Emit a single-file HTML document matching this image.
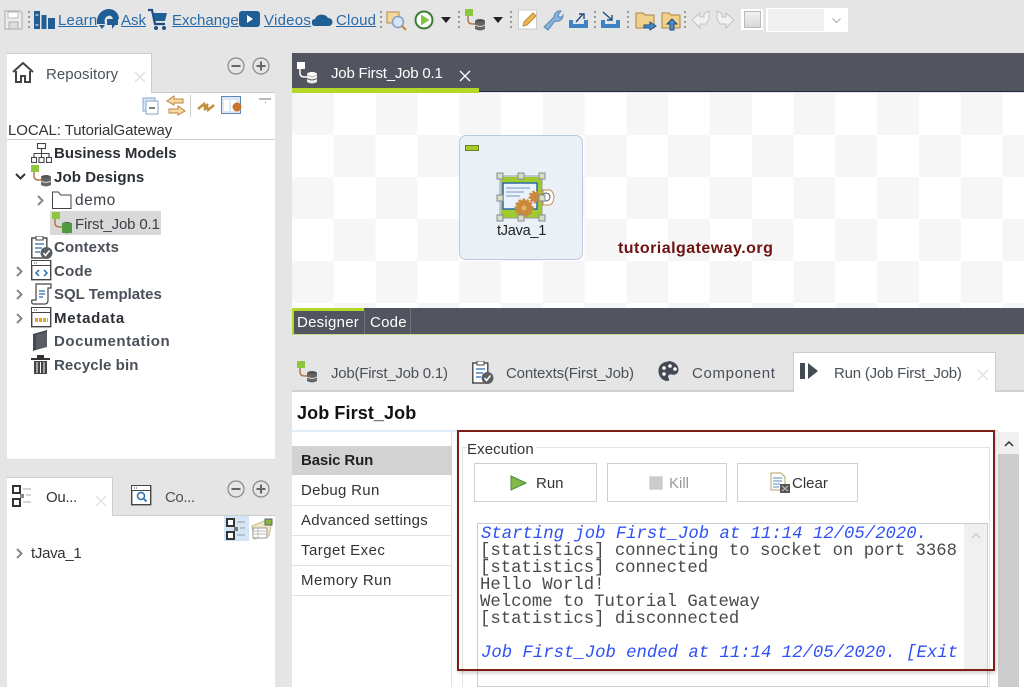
<!DOCTYPE html>
<html><head><meta charset="utf-8"><style>
html,body{margin:0;padding:0}
body{width:1024px;height:687px;overflow:hidden;position:relative;background:#e5e5e5;font-family:"Liberation Sans",sans-serif;font-size:15px;color:#3a4048}
.a,.t,svg.i{position:absolute}
.t{white-space:pre;line-height:20px;margin-top:1px}
.l{color:#2a6aa8;text-decoration:underline;font-size:15px}
.b{font-weight:bold;color:#2b2f36}
.dots{position:absolute;width:2px;height:18px;top:11px;background:repeating-linear-gradient(#999 0 2px,transparent 2px 5px)}
.m{font-family:"Liberation Mono",monospace;font-size:17.3px;line-height:17px;color:#4a4a4a;left:480px}
.mb{color:#2f50f5;font-style:italic;left:481px}
.btn{position:absolute;top:463px;height:37px;background:#fff;border:1px solid #cfcfcf;box-sizing:content-box}
.sep{position:absolute;left:292px;width:160px;height:1px;background:#e2e2e2}
</style></head><body>
<svg width="0" height="0" style="position:absolute"><defs>
<g id="job"><rect x="0" y="0" width="8" height="7" fill="#8ec63f"/><path d="M3 7v4q0 4 5 4h4" fill="none" stroke="#b5794a" stroke-width="1.5"/><ellipse cx="15" cy="12" rx="5" ry="2" fill="#555"/><path d="M10 12v8q5 3 10 0v-8q-5 3-10 0z" fill="#666"/><path d="M10 16q5 3 10 0" stroke="#ddd" fill="none"/></g>
<g id="ctx"><rect x=".8" y="2" width="15" height="20" fill="#fff" stroke="#444" stroke-width="1.4"/><rect x="5" y="0" width="7" height="4" fill="#fff" stroke="#444"/><path d="M4 8h9M4 12h7M4 16h5" stroke="#2a6aa8" stroke-width="1.3"/><circle cx="15.5" cy="17" r="6" fill="#5a5f66"/><path d="M12.5 17l2 2.5 4-5" stroke="#fff" stroke-width="1.5" fill="none"/></g>
<g id="win"><rect x=".7" y=".7" width="19" height="19" fill="#fff" stroke="#444" stroke-width="1.4"/><rect x="1" y="1" width="18" height="4" fill="#fff"/><path d="M1 5.5h18" stroke="#444"/><path d="M3 3h4" stroke="#444" stroke-dasharray="1 1"/></g>
<path id="ch" d="M0 0l4.500 4.500-4.500 4.500" fill="none" stroke="#888" stroke-width="2"/>
</defs></svg>

<!-- toolbar -->
<svg class="i" style="left:4px;top:10px" width="19" height="20"><path d="M1 1h15l2 2v16H1z" fill="#eee" stroke="#aaa"/><rect x="4" y="2" width="10" height="6" fill="#fff" stroke="#bbb"/><rect x="5" y="12" width="9" height="7" fill="#ddd" stroke="#aaa"/></svg>
<div class="dots" style="left:28px"></div>
<svg class="i" style="left:34px;top:10px" width="22" height="20"><rect x="0" y="1" width="6" height="18" fill="#1f5f96"/><rect x="7.500" y="5" width="5" height="14" fill="#1f5f96"/><rect x="14" y="8" width="7" height="11" fill="#1f5f96"/><path d="M1.500 5h3M1.500 15h3" stroke="#fff"/></svg>
<div class="t l" style="left:58px;top:10px;letter-spacing:.2px">Learn</div>
<svg class="i" style="left:97px;top:9px" width="22" height="21"><path d="M0 15C-1 5 6 0 12 0c6 0 10 5 10 10h-6c-1-3-3-4-5-3-3 1-4 4-3 8z" fill="#1f5f96"/><path d="M10 10h11v6h-3l-3 4v-4h-5z" fill="#1f5f96"/><path d="M2 16h6l-3 4z" fill="#1f5f96"/></svg>
<div class="t l" style="left:121px;top:10px">Ask</div>
<svg class="i" style="left:147px;top:8px" width="21" height="23"><path d="M1 2h4l3 14h10" fill="none" stroke="#1f4f80" stroke-width="2.200"/><path d="M6 5h14l-2 8H8z" fill="#1f5f96"/><circle cx="9" cy="20" r="2" fill="#1f4f80"/><circle cx="17" cy="20" r="2" fill="#1f4f80"/></svg>
<div class="t l" style="left:172px;top:10px">Exchange</div>
<svg class="i" style="left:239px;top:11px" width="21" height="17"><rect width="21" height="16" rx="3" fill="#1f5f96"/><path d="M8 4l6 4-6 4z" fill="#fff"/></svg>
<div class="t l" style="left:264px;top:10px;letter-spacing:.25px">Videos</div>
<svg class="i" style="left:312px;top:12px" width="21" height="15"><path d="M3 14a3.500 3.500 0 0 1 0-7 7 6 0 0 1 13-1 4 4 0 0 1 1 8z" fill="#1f5f96"/></svg>
<div class="t l" style="left:336px;top:10px;letter-spacing:.2px">Cloud</div>
<div class="dots" style="left:380px"></div>
<svg class="i" style="left:386px;top:9px" width="22" height="22"><rect x="1" y="3" width="12" height="11" fill="#f3d79b" stroke="#b98a45"/><circle cx="12" cy="13" r="5.500" fill="#d5e5f5" stroke="#7f9fc0" stroke-width="1.500"/><path d="M16 17l4 4" stroke="#c8873a" stroke-width="2"/></svg>
<svg class="i" style="left:414px;top:10px" width="20" height="20"><circle cx="10" cy="10" r="9.500" fill="#3d7a35"/><circle cx="10" cy="10" r="7.500" fill="#fff"/><path d="M7 4.500l8.500 5.500-8.500 5.500z" fill="#82c341"/></svg>
<svg class="i" style="left:441px;top:17px" width="10" height="7"><path d="M0 0h10l-5 6z" fill="#222"/></svg>
<div class="dots" style="left:458px"></div>
<svg class="i" style="left:465px;top:9px" width="22" height="22"><use href="#job"/></svg>
<svg class="i" style="left:493px;top:17px" width="10" height="7"><path d="M0 0h10l-5 6z" fill="#222"/></svg>
<div class="dots" style="left:510px"></div>
<svg class="i" style="left:518px;top:9px" width="20" height="21"><rect x=".5" y="1" width="18" height="19" fill="#fff" stroke="#ccc"/><path d="M5 17l1-4 9-9 3 3-9 9z" fill="#eeb54e" stroke="#b98a45"/></svg>
<svg class="i" style="left:542px;top:9px" width="22" height="22"><path d="M2 18L12 8a6 6 0 0 1 7-6l-3 4 1 2 3 0 1-2a6 6 0 0 1-8 6L6 21z" fill="#8ab0dc" stroke="#5c88b8"/></svg>
<svg class="i" style="left:568px;top:11px" width="21" height="18"><path d="M1 9v8h19V9h-4v4H5V9z" fill="#3d82c4"/><path d="M8 11l7-8M11 3h5v5" stroke="#1f4f80" stroke-width="1.400" fill="none"/></svg>
<div class="dots" style="left:594px"></div>
<svg class="i" style="left:600px;top:11px" width="21" height="18"><path d="M1 9v8h19V9h-4v4H5V9z" fill="#3d82c4"/><path d="M3 1l9 8M12 4v5H7" stroke="#1f4f80" stroke-width="1.400" fill="none"/></svg>
<div class="dots" style="left:627px"></div>
<svg class="i" style="left:635px;top:10px" width="22" height="21"><path d="M1 3h7l2 2h9v13H1z" fill="#f1d089" stroke="#ab8547"/><path d="M9 15h6v-3l6 4-6 4v-2H9z" fill="#4d8ac8" stroke="#1f4f80"/></svg>
<svg class="i" style="left:661px;top:10px" width="22" height="21"><path d="M1 3h7l2 2h9v13H1z" fill="#f1d089" stroke="#ab8547"/><path d="M11 9l5 5h-3v6H9v-6H6z" fill="#4d8ac8" stroke="#1f4f80"/></svg>
<div class="dots" style="left:684px"></div>
<svg class="i" style="left:691px;top:10px" width="20" height="20"><path d="M18 1l-4 2-1 1v3H9V3L1 10l8 8v-4h6l3-5z" fill="#f1f1f1" stroke="#c2c2c2"/></svg>
<svg class="i" style="left:715px;top:10px" width="20" height="20"><path d="M2 1l4 2 1 1v3h4V3l8 7-8 8v-4H5L2 9z" fill="#f1f1f1" stroke="#c2c2c2"/></svg>
<div class="a" style="left:741px;top:9px;width:22px;height:21px;background:#fff"></div>
<div class="a" style="left:744px;top:11px;width:17px;height:17px;background:linear-gradient(#f2f2f2,#d8d8d8);border:1px solid #bbb;box-sizing:border-box"></div>
<div class="a" style="left:766px;top:8px;width:82px;height:24px;background:#fff"></div>
<div class="a" style="left:768px;top:9px;width:56px;height:22px;background:#f0f0f0"></div>
<svg class="i" style="left:832px;top:18px" width="10" height="6"><path d="M.5.500l4 4 4-4" fill="none" stroke="#aaa"/></svg>

<!-- Repository panel -->
<div class="a" style="left:7px;top:53px;width:145px;height:41px;background:#fff;border-top:1px solid #ccc;border-right:1px solid #ccc;box-sizing:border-box"></div>
<div class="a" style="left:152px;top:92px;width:123px;height:1px;background:#ccc"></div>
<div class="a" style="left:7px;top:93px;width:268px;height:367px;background:#fff;border-bottom:1px solid #ddd;box-sizing:border-box"></div>
<svg class="i" style="left:12px;top:62px" width="22" height="21"><path d="M1 10L11 1l10 9" fill="none" stroke="#444" stroke-width="2"/><path d="M4 9v11h5v-6h4v6h5V9" fill="#fff" stroke="#444" stroke-width="2"/></svg>
<div class="t" style="left:46px;top:64px;letter-spacing:.05px;color:#4a5058">Repository</div>
<svg class="i" style="left:134px;top:71px" width="12" height="12"><path d="M1 1l10 10M11 1L1 11" stroke="#e2e2e2" stroke-width="1.500"/></svg>
<svg class="i" style="left:227px;top:57px" width="44" height="18"><circle cx="9" cy="9" r="8" fill="none" stroke="#888" stroke-width="1.200"/><path d="M4.500 9h9" stroke="#666" stroke-width="2"/><circle cx="34" cy="9" r="8" fill="none" stroke="#888" stroke-width="1.200"/><path d="M29.500 9h9M34 4.500v9" stroke="#666" stroke-width="2"/></svg>
<svg class="i" style="left:142px;top:96px" width="18" height="20"><rect x="1" y="2" width="12" height="13" fill="#dce8f5" stroke="#8aa7c8"/><rect x="4" y="5" width="12" height="13" fill="#fff" stroke="#8aa7c8"/><path d="M7 12h6" stroke="#555" stroke-width="1.500"/></svg>
<svg class="i" style="left:165px;top:95px" width="22" height="22"><path d="M9 1L2 6l7 4V8h9V4H9zM13 11l7 5-7 4v-2H4v-4h9z" fill="#f6d9a5" stroke="#b9843d"/></svg>
<div class="a" style="left:190px;top:95px;width:1px;height:22px;background:#ccc"></div>
<svg class="i" style="left:196px;top:97px" width="20" height="20"><path d="M2 12l6-5 1 3 3-3M18 8l-6 5-1-3-3 3" fill="none" stroke="#c38e3d" stroke-width="2.500"/></svg>
<svg class="i" style="left:221px;top:96px" width="22" height="19"><rect x=".5" y=".5" width="19" height="17" fill="#dce8f5" stroke="#5c88b8"/><rect x="3" y="4" width="5" height="11" fill="#fff"/><rect x="10" y="4" width="5" height="11" fill="#fff"/><circle cx="16" cy="11" r="4.500" fill="#c8742a"/></svg>
<svg class="i" style="left:258px;top:98px" width="14" height="8"><path d="M1 1h12" stroke="#777"/><path d="M7 4h1v1H7z" fill="#777"/></svg>
<div class="t" style="left:8px;top:120px;color:#333;letter-spacing:-.08px">LOCAL: TutorialGateway</div>
<div class="a" style="left:7px;top:139px;width:268px;height:1px;background:#ccc"></div>

<svg class="i" style="left:31px;top:143px" width="21" height="20"><g fill="#fff" stroke="#444" stroke-width="1.100"><rect x="6.500" y=".5" width="8" height="5"/><rect x=".5" y="14.500" width="5" height="5"/><rect x="8" y="14.500" width="5" height="5"/><rect x="15.500" y="14.500" width="5" height="5"/><path d="M10.500 5.500v9M3 14.500v-4h15v4" fill="none"/></g></svg>
<div class="t b" style="left:54px;top:143px">Business Models</div>
<svg class="i" style="left:15px;top:173px" width="11" height="8"><path d="M1 1l4.500 4.500L10 1" fill="none" stroke="#333" stroke-width="2"/></svg>
<svg class="i" style="left:31px;top:165px" width="22" height="22"><use href="#job"/></svg>
<div class="t b" style="left:54px;top:167px;letter-spacing:.1px">Job Designs</div>
<svg class="i" style="left:37px;top:195px" width="8" height="11"><use href="#ch" x="1" y="1"/></svg>
<svg class="i" style="left:52px;top:191px" width="20" height="18"><path d="M.5 17.500V1h6l2 3h10.500v13.500z" fill="#fff" stroke="#444"/></svg>
<div class="t" style="left:75px;top:190px;font-size:15.500px;letter-spacing:.5px">demo</div>
<div class="a" style="left:50px;top:211px;width:111px;height:24px;background:#d9d9d9"></div>
<svg class="i" style="left:52px;top:212px" width="22" height="22"><use href="#job"/><rect x="10" y="11" width="10" height="10" fill="#4d9a3f"/></svg>
<div class="t" style="left:75px;top:214px;letter-spacing:-.15px">First_Job 0.1</div>
<svg class="i" style="left:31px;top:236px" width="22" height="23"><use href="#ctx"/></svg>
<div class="t b" style="left:54px;top:237px;color:#4a5058;letter-spacing:.12px">Contexts</div>
<svg class="i" style="left:16px;top:266px" width="8" height="11"><use href="#ch" x="1" y="1"/></svg>
<svg class="i" style="left:31px;top:260px" width="21" height="21"><use href="#win"/><path d="M8 10l-3 3 3 3M13 10l3 3-3 3" stroke="#2a6aa8" stroke-width="1.500" fill="none"/></svg>
<div class="t b" style="left:54px;top:261px;color:#4a5058;letter-spacing:.25px">Code</div>
<svg class="i" style="left:16px;top:289px" width="8" height="11"><use href="#ch" x="1" y="1"/></svg>
<svg class="i" style="left:31px;top:283px" width="21" height="22"><path d="M5 1h15v4h-3v12q0 4-3 4H2q-2-1-1-4h4z" fill="#fff" stroke="#444" stroke-width="1.200"/><path d="M8 8h6M8 11h6M8 14h4" stroke="#2a6aa8" stroke-width="1.200"/></svg>
<div class="t b" style="left:54px;top:284px;color:#4a5058">SQL Templates</div>
<svg class="i" style="left:16px;top:313px" width="8" height="11"><use href="#ch" x="1" y="1"/></svg>
<svg class="i" style="left:31px;top:307px" width="21" height="21"><use href="#win"/><path d="M4 13h13" stroke="#e3a33b" stroke-width="4" stroke-dasharray="3 1"/></svg>
<div class="t b" style="left:54px;top:308px;letter-spacing:.75px">Metadata</div>
<svg class="i" style="left:33px;top:330px" width="17" height="22"><path d="M0 4L14 0v16L0 21z" fill="#44484e"/><path d="M3 5l11-3v15L3 20z" fill="#595d64"/></svg>
<div class="t b" style="left:54px;top:331px;color:#4a5058;letter-spacing:.54px">Documentation</div>
<svg class="i" style="left:31px;top:354px" width="19" height="20"><path d="M0 4h19v2H0zM6 1h7v3H6z" fill="#333"/><path d="M3 7h13v13H3z" fill="#444"/><path d="M6 8v11M9.500 8v11M13 8v11" stroke="#fff"/></svg>
<div class="t b" style="left:54px;top:355px;color:#4a5058;letter-spacing:.1px">Recycle bin</div>

<!-- Outline panel -->
<div class="a" style="left:7px;top:477px;width:106px;height:40px;background:#fff;border-top:1px solid #ccc;border-right:1px solid #ccc;box-sizing:border-box"></div>
<div class="a" style="left:113px;top:515px;width:162px;height:1px;background:#ccc"></div>
<div class="a" style="left:7px;top:516px;width:268px;height:171px;background:#fff"></div>
<svg class="i" style="left:12px;top:485px" width="20" height="22"><rect x="1" y="1" width="7" height="7" fill="#fff" stroke="#333" stroke-width="2"/><rect x="1" y="14" width="7" height="7" fill="#fff" stroke="#333" stroke-width="2"/><rect x="8" y="9" width="4" height="4" fill="#888"/><path d="M11 4h8M14 10h5M11 17h8" stroke="#aaa"/></svg>
<div class="t" style="left:46px;top:487px;color:#333;letter-spacing:-.3px">Ou...</div>
<svg class="i" style="left:95px;top:495px" width="12" height="12"><path d="M1 1l10 10M11 1L1 11" stroke="#e2e2e2" stroke-width="1.500"/></svg>
<svg class="i" style="left:131px;top:485px" width="21" height="21"><use href="#win"/><circle cx="10" cy="11" r="3.500" fill="none" stroke="#2a6aa8" stroke-width="1.500"/><path d="M12.500 13.500l3 3" stroke="#2a6aa8" stroke-width="1.700"/></svg>
<div class="t" style="left:165px;top:487px;color:#4a5058;letter-spacing:-.4px">Co...</div>
<svg class="i" style="left:227px;top:480px" width="44" height="18"><circle cx="9" cy="9" r="8" fill="none" stroke="#888" stroke-width="1.200"/><path d="M4.500 9h9" stroke="#666" stroke-width="2"/><circle cx="34" cy="9" r="8" fill="none" stroke="#888" stroke-width="1.200"/><path d="M29.500 9h9M34 4.500v9" stroke="#666" stroke-width="2"/></svg>
<div class="a" style="left:224px;top:516px;width:25px;height:25px;background:#d5e5f8"></div>
<svg class="i" style="left:226px;top:518px" width="20" height="22"><rect x="1" y="1" width="7" height="7" fill="#fff" stroke="#333" stroke-width="2"/><rect x="1" y="14" width="7" height="7" fill="#fff" stroke="#333" stroke-width="2"/><rect x="8" y="9" width="4" height="4" fill="#777"/><path d="M11 4h8M14 10h5M11 17h8" stroke="#999"/></svg>
<svg class="i" style="left:251px;top:518px" width="22" height="22"><path d="M1 8L18 1l3 2-3 15-15 3z" fill="#efe7c4" stroke="#c7bd90"/><path d="M2 10h14v10H2z" fill="#fff" stroke="#999"/><path d="M2 13h14M2 16h14M7 10v10" stroke="#bbb"/><rect x="14" y="1" width="7" height="6" fill="#8db33f" stroke="#567"/></svg>
<svg class="i" style="left:16px;top:548px" width="8" height="11"><use href="#ch" x="1" y="1"/></svg>
<div class="t" style="left:31px;top:543px;color:#333;letter-spacing:-.3px">tJava_1</div>

<!-- Editor -->
<div class="a" style="left:292px;top:53px;width:732px;height:39px;background:#52555f"></div>
<div class="a" style="left:292px;top:88px;width:187px;height:5px;background:#b5d827"></div>
<div class="a" style="left:479px;top:91px;width:545px;height:1px;background:#1f2a4a"></div>
<svg class="i" style="left:297px;top:62px" width="22" height="22"><rect x="0" y="0" width="8" height="7" fill="#fff"/><path d="M3 7v4q0 4 5 4h4" fill="none" stroke="#fff" stroke-width="1.500"/><ellipse cx="15" cy="12" rx="5" ry="2" fill="#fff"/><path d="M10 13v7q5 3 10 0v-7q-5 3-10 0z" fill="#eee"/><path d="M10 16.500q5 3 10 0" stroke="#52555f" fill="none"/></svg>
<div class="t" style="left:331px;top:63px;color:#fff;letter-spacing:-.2px">Job First_Job 0.1</div>
<svg class="i" style="left:459px;top:70px" width="12" height="12"><path d="M1 1l10 10M11 1L1 11" stroke="#fff" stroke-width="1.300"/></svg>

<div class="a" style="left:292px;top:93px;width:732px;height:215px;background-color:#fff;background-image:repeating-conic-gradient(#f6f6f6 0 25%,#fff 0 50%);background-size:83.600px 84px;background-position:0 -42px"></div>

<!-- node -->
<div class="a" style="left:459px;top:135px;width:124px;height:125px;background:#e9f0f6;border:1px solid #bccbe0;border-radius:7px;box-sizing:border-box"></div>
<div class="a" style="left:465px;top:145px;width:12px;height:4px;background:#a8cc2c;border:1px solid #6d7f2a"></div>
<svg class="i" style="left:495px;top:172px" width="65" height="52">
<rect x="6" y="5" width="41" height="41" fill="#9ecb2d"/><path d="M5 4h42v42H5z" fill="none" stroke="#999" stroke-width="1"/>
<rect x="8" y="11" width="34" height="26" fill="#eaf2fb" stroke="#2a6aa8" stroke-width="1.500"/><path d="M11 16h24M11 20h18M11 24h14" stroke="#9bb6d4" stroke-width="1.500"/>
<circle cx="40" cy="25" r="5" fill="#c98a3b" stroke="#c98a3b" stroke-width="3" stroke-dasharray="2 1.500"/><circle cx="29" cy="36" r="8" fill="#c98a3b" stroke="#c98a3b" stroke-width="3" stroke-dasharray="2.500 1.500"/><circle cx="29" cy="36" r="2.500" fill="#e3b36c"/>
<path d="M48 18h6q4 0 5 7-1 8-5 8h-6z" fill="#fff" stroke="#c98a3b"/><circle cx="51" cy="25" r="4" fill="none" stroke="#555"/>
<g fill="#d8dfc0" stroke="#889"><rect x="2" y="1" width="6" height="6"/><rect x="23" y="1" width="6" height="6"/><rect x="44" y="1" width="6" height="6"/><rect x="2" y="23" width="6" height="6"/><rect x="44" y="23" width="6" height="6"/><rect x="2" y="43" width="6" height="6"/><rect x="23" y="43" width="6" height="6"/><rect x="44" y="43" width="6" height="6"/></g></svg>
<div class="t" style="left:497px;top:220px;color:#222;font-size:14.500px;letter-spacing:-.25px">tJava_1</div>
<div class="t" style="left:618px;top:238px;color:#6e1212;font-weight:bold;font-size:16px;letter-spacing:.47px">tutorialgateway.org</div>

<!-- designer bar -->
<div class="a" style="left:292px;top:308px;width:732px;height:27px;background:#52555f"></div>
<div class="a" style="left:292px;top:308px;width:72px;height:3px;background:#b5d827"></div>
<div class="a" style="left:292px;top:311px;width:2px;height:24px;background:#b5d827"></div>
<div class="a" style="left:292px;top:334px;width:732px;height:1px;background:#c9d88a"></div>
<div class="a" style="left:364px;top:311px;width:1px;height:23px;background:#6f727b"></div>
<div class="a" style="left:410px;top:308px;width:1px;height:26px;background:#6f727b"></div>
<div class="t" style="left:297px;top:312px;color:#fff;letter-spacing:.25px">Designer</div>
<div class="t" style="left:370px;top:312px;color:#fff;letter-spacing:.25px">Code</div>

<!-- bottom tabs -->
<div class="a" style="left:292px;top:390px;width:732px;height:2px;background:#d0d0d0"></div>
<svg class="i" style="left:297px;top:361px" width="22" height="22"><use href="#job"/></svg>
<div class="t" style="left:331px;top:363px;color:#4a5058;letter-spacing:-.23px">Job(First_Job 0.1)</div>
<svg class="i" style="left:472px;top:361px" width="22" height="23"><use href="#ctx"/></svg>
<div class="t" style="left:506px;top:363px;color:#4a5058;letter-spacing:-.16px">Contexts(First_Job)</div>
<svg class="i" style="left:658px;top:361px" width="22" height="21"><path d="M11 .5C4 .5 0 5 .5 11c.5 5 4 9 9 9 2 0 2-2 1-3-1-2 0-4 3-3.500 4 1 7-1 7-5 0-5-5-8.500-10.500-8.500z" fill="#444a52"/><circle cx="6" cy="7" r="1.800" fill="#fff"/><circle cx="12" cy="5" r="1.800" fill="#fff"/><circle cx="17" cy="8" r="1.800" fill="#fff"/><circle cx="6" cy="13" r="1.800" fill="#fff"/></svg>
<div class="t" style="left:692px;top:363px;color:#4a5058;letter-spacing:.67px">Component</div>
<div class="a" style="left:793px;top:352px;width:203px;height:41px;background:#fff;border:1px solid #ccc;border-bottom:0;box-sizing:border-box"></div>
<svg class="i" style="left:800px;top:363px" width="19" height="17"><rect x="0" y="0" width="5" height="16" fill="#454b55"/><path d="M8 0l10 8-10 8z" fill="#454b55"/></svg>
<div class="t" style="left:834px;top:363px;color:#4a5058;letter-spacing:-.21px">Run (Job First_Job)</div>
<svg class="i" style="left:977px;top:369px" width="12" height="12"><path d="M1 1l10 10M11 1L1 11" stroke="#e2e2e2" stroke-width="1.500"/></svg>

<!-- run view -->
<div class="a" style="left:292px;top:392px;width:732px;height:295px;background:#fff"></div>
<div class="t b" style="left:297px;top:402px;font-size:18px;color:#111;letter-spacing:.1px">Job First_Job</div>
<div class="a" style="left:292px;top:430px;width:706px;height:2px;background:#e2ecf7"></div>
<div class="a" style="left:451px;top:432px;width:1px;height:255px;background:#e2e2e2"></div>
<div class="a" style="left:292px;top:446px;width:160px;height:29px;background:#d2d2d2"></div>
<div class="t b" style="left:301px;top:450px;color:#222;letter-spacing:-.13px">Basic Run</div>
<div class="t" style="left:301px;top:480px;color:#333;letter-spacing:.3px">Debug Run</div><div class="sep" style="top:505px"></div>
<div class="t" style="left:301px;top:510px;color:#333;letter-spacing:.26px">Advanced settings</div><div class="sep" style="top:535px"></div>
<div class="t" style="left:301px;top:540px;color:#333;letter-spacing:.47px">Target Exec</div><div class="sep" style="top:565px"></div>
<div class="t" style="left:301px;top:570px;color:#333;letter-spacing:.5px">Memory Run</div><div class="sep" style="top:595px"></div>

<div class="a" style="left:462px;top:447px;width:528px;height:240px;border:1px solid #e4e4e4;border-bottom:0;box-sizing:border-box"></div>
<div class="t" style="left:467px;top:439px;background:#fff;padding-right:2px;color:#333;letter-spacing:.1px">Execution</div>
<div class="btn" style="left:474px;width:121px"></div>
<svg class="i" style="left:510px;top:475px" width="17" height="16"><path d="M1 1l15 7-15 7z" fill="#82b84a" stroke="#4f8a38"/></svg>
<div class="t" style="left:536px;top:473px;color:#333">Run</div>
<div class="btn" style="left:607px;width:118px"></div>
<div class="a" style="left:649px;top:476px;width:14px;height:14px;background:#ccc;border:1px solid #ddd;box-sizing:border-box"></div>
<div class="t" style="left:669px;top:473px;color:#999">Kill</div>
<div class="btn" style="left:737px;width:119px"></div>
<svg class="i" style="left:770px;top:472px" width="21" height="21"><path d="M1 1h10l4 4v13H1z" fill="#fff" stroke="#b9a36a"/><path d="M3 6h9M3 9h9M3 12h7M3 15h6" stroke="#5c88b8"/><path d="M10 12h10v9H10z" fill="#555"/><path d="M12 14l6 5M18 14l-6 5" stroke="#ccc"/></svg>
<div class="t" style="left:792px;top:473px;color:#333">Clear</div>

<div class="a" style="left:477px;top:523px;width:511px;height:164px;border:1px solid #ccc;box-sizing:border-box;background:#fff"></div>
<div class="a" style="left:964px;top:524px;width:23px;height:146px;background:#f0f0f0"></div>
<svg class="i" style="left:971px;top:533px" width="10" height="7"><path d="M1 5l4-4 4 4" fill="none" stroke="#ccc" stroke-width="1.500"/></svg>
<div class="t m mb" style="top:525px">Starting job First_Job at 11:14 12/05/2020.</div>
<div class="t m" style="top:542px">[statistics] connecting to socket on port 3368</div>
<div class="t m" style="top:559px">[statistics] connected</div>
<div class="t m" style="top:576px">Hello World!</div>
<div class="t m" style="top:593px">Welcome to Tutorial Gateway</div>
<div class="t m" style="top:610px">[statistics] disconnected</div>
<div class="a" style="left:481px;top:644px;width:481px;height:18px;overflow:hidden"><div class="t m mb" style="top:0;left:0">Job First_Job ended at 11:14 12/05/2020. [Exit code=0]</div></div>

<div class="a" style="left:998px;top:432px;width:21px;height:255px;background:#f0f0f0"></div>
<svg class="i" style="left:1004px;top:441px" width="10" height="7"><path d="M1 5l4-4 4 4" fill="none" stroke="#333" stroke-width="1.500"/></svg>
<div class="a" style="left:998px;top:454px;width:21px;height:233px;background:#cdcdcd"></div>

<div class="a" style="left:457px;top:430px;width:538px;height:241px;border:2px solid #7d1f17;box-sizing:border-box;box-shadow:1px 2px 4px rgba(0,0,0,.2)"></div>
</body></html>
